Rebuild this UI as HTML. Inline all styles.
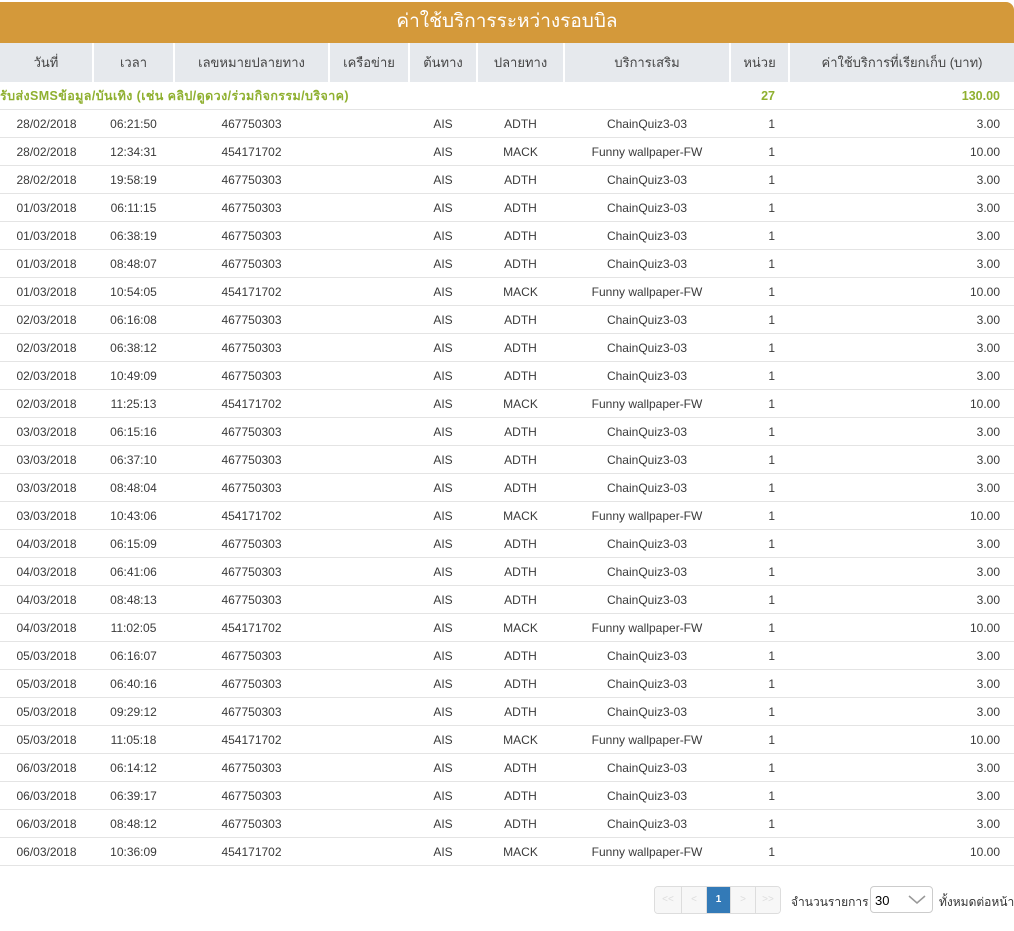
<!DOCTYPE html>
<html><head><meta charset="utf-8"><style>
body{margin:0;width:1014px;height:931px;background:#fff;font-family:"Liberation Sans","Noto Sans CJK SC",sans-serif;overflow:hidden;position:relative}
.title{position:absolute;left:0;top:2px;width:1014px;height:41px;background:#d4993a;border-top-right-radius:8px;color:#fff;font-size:19px;text-align:center;line-height:40px}
table{position:absolute;left:0;top:43px;border-collapse:collapse;table-layout:fixed;width:1014px;font-size:12px;color:#3a3a3a}
th{background:#e6e9ed;height:39px;font-weight:normal;font-size:13px;color:#444;border-left:2px solid #fff;padding:0}
th:first-child{border-left:none}
td{height:27px;border-bottom:1px solid #e4e4e4;text-align:center;padding:0;white-space:nowrap}
td.r{text-align:right;padding-right:14px}
td.u{text-align:right;padding-right:14px}
tr.g td{color:#8fb030;font-weight:bold;font-size:12.5px}
.pg{position:absolute;top:886px;left:654px;display:flex;border:1px solid #ddd;border-radius:4px;height:26px;overflow:hidden}
.pg span{width:24px;border-left:1px solid #ddd;color:#ddd;font-size:10px;text-align:center;line-height:26px;background:#f7f7f7}
.pg span:first-child{border:none;width:26px}
.pg span.a{background:#337ab7;color:#fff;font-weight:bold;width:23px}
.lab{position:absolute;top:893px;font-size:12px;color:#333;white-space:nowrap}
.sel{position:absolute;left:870px;top:886px;width:63px;height:27px;border:1px solid #ccc;border-radius:4px;font-size:13px;line-height:27px;box-sizing:border-box;padding-left:4px}
</style></head><body>
<div class="title">ค่าใช้บริการระหว่างรอบบิล</div>
<table>
<colgroup><col style="width:93px"><col style="width:81px"><col style="width:155px"><col style="width:80px"><col style="width:68px"><col style="width:87px"><col style="width:166px"><col style="width:59px"><col style="width:225px"></colgroup>
<tr><th>วันที่</th><th>เวลา</th><th>เลขหมายปลายทาง</th><th>เครือข่าย</th><th>ต้นทาง</th><th>ปลายทาง</th><th>บริการเสริม</th><th>หน่วย</th><th>ค่าใช้บริการที่เรียกเก็บ (บาท)</th></tr>
<tr class="g"><td colspan="7" style="text-align:left;overflow:visible;letter-spacing:0.4px">รับส่งSMSข้อมูล/บันเทิง (เช่น คลิป/ดูดวง/ร่วมกิจกรรม/บริจาค)</td><td class="u">27</td><td class="r">130.00</td></tr>
<tr><td>28/02/2018</td><td>06:21:50</td><td>467750303</td><td></td><td>AIS</td><td>ADTH</td><td>ChainQuiz3-03</td><td class="u">1</td><td class="r">3.00</td></tr>
<tr><td>28/02/2018</td><td>12:34:31</td><td>454171702</td><td></td><td>AIS</td><td>MACK</td><td>Funny wallpaper-FW</td><td class="u">1</td><td class="r">10.00</td></tr>
<tr><td>28/02/2018</td><td>19:58:19</td><td>467750303</td><td></td><td>AIS</td><td>ADTH</td><td>ChainQuiz3-03</td><td class="u">1</td><td class="r">3.00</td></tr>
<tr><td>01/03/2018</td><td>06:11:15</td><td>467750303</td><td></td><td>AIS</td><td>ADTH</td><td>ChainQuiz3-03</td><td class="u">1</td><td class="r">3.00</td></tr>
<tr><td>01/03/2018</td><td>06:38:19</td><td>467750303</td><td></td><td>AIS</td><td>ADTH</td><td>ChainQuiz3-03</td><td class="u">1</td><td class="r">3.00</td></tr>
<tr><td>01/03/2018</td><td>08:48:07</td><td>467750303</td><td></td><td>AIS</td><td>ADTH</td><td>ChainQuiz3-03</td><td class="u">1</td><td class="r">3.00</td></tr>
<tr><td>01/03/2018</td><td>10:54:05</td><td>454171702</td><td></td><td>AIS</td><td>MACK</td><td>Funny wallpaper-FW</td><td class="u">1</td><td class="r">10.00</td></tr>
<tr><td>02/03/2018</td><td>06:16:08</td><td>467750303</td><td></td><td>AIS</td><td>ADTH</td><td>ChainQuiz3-03</td><td class="u">1</td><td class="r">3.00</td></tr>
<tr><td>02/03/2018</td><td>06:38:12</td><td>467750303</td><td></td><td>AIS</td><td>ADTH</td><td>ChainQuiz3-03</td><td class="u">1</td><td class="r">3.00</td></tr>
<tr><td>02/03/2018</td><td>10:49:09</td><td>467750303</td><td></td><td>AIS</td><td>ADTH</td><td>ChainQuiz3-03</td><td class="u">1</td><td class="r">3.00</td></tr>
<tr><td>02/03/2018</td><td>11:25:13</td><td>454171702</td><td></td><td>AIS</td><td>MACK</td><td>Funny wallpaper-FW</td><td class="u">1</td><td class="r">10.00</td></tr>
<tr><td>03/03/2018</td><td>06:15:16</td><td>467750303</td><td></td><td>AIS</td><td>ADTH</td><td>ChainQuiz3-03</td><td class="u">1</td><td class="r">3.00</td></tr>
<tr><td>03/03/2018</td><td>06:37:10</td><td>467750303</td><td></td><td>AIS</td><td>ADTH</td><td>ChainQuiz3-03</td><td class="u">1</td><td class="r">3.00</td></tr>
<tr><td>03/03/2018</td><td>08:48:04</td><td>467750303</td><td></td><td>AIS</td><td>ADTH</td><td>ChainQuiz3-03</td><td class="u">1</td><td class="r">3.00</td></tr>
<tr><td>03/03/2018</td><td>10:43:06</td><td>454171702</td><td></td><td>AIS</td><td>MACK</td><td>Funny wallpaper-FW</td><td class="u">1</td><td class="r">10.00</td></tr>
<tr><td>04/03/2018</td><td>06:15:09</td><td>467750303</td><td></td><td>AIS</td><td>ADTH</td><td>ChainQuiz3-03</td><td class="u">1</td><td class="r">3.00</td></tr>
<tr><td>04/03/2018</td><td>06:41:06</td><td>467750303</td><td></td><td>AIS</td><td>ADTH</td><td>ChainQuiz3-03</td><td class="u">1</td><td class="r">3.00</td></tr>
<tr><td>04/03/2018</td><td>08:48:13</td><td>467750303</td><td></td><td>AIS</td><td>ADTH</td><td>ChainQuiz3-03</td><td class="u">1</td><td class="r">3.00</td></tr>
<tr><td>04/03/2018</td><td>11:02:05</td><td>454171702</td><td></td><td>AIS</td><td>MACK</td><td>Funny wallpaper-FW</td><td class="u">1</td><td class="r">10.00</td></tr>
<tr><td>05/03/2018</td><td>06:16:07</td><td>467750303</td><td></td><td>AIS</td><td>ADTH</td><td>ChainQuiz3-03</td><td class="u">1</td><td class="r">3.00</td></tr>
<tr><td>05/03/2018</td><td>06:40:16</td><td>467750303</td><td></td><td>AIS</td><td>ADTH</td><td>ChainQuiz3-03</td><td class="u">1</td><td class="r">3.00</td></tr>
<tr><td>05/03/2018</td><td>09:29:12</td><td>467750303</td><td></td><td>AIS</td><td>ADTH</td><td>ChainQuiz3-03</td><td class="u">1</td><td class="r">3.00</td></tr>
<tr><td>05/03/2018</td><td>11:05:18</td><td>454171702</td><td></td><td>AIS</td><td>MACK</td><td>Funny wallpaper-FW</td><td class="u">1</td><td class="r">10.00</td></tr>
<tr><td>06/03/2018</td><td>06:14:12</td><td>467750303</td><td></td><td>AIS</td><td>ADTH</td><td>ChainQuiz3-03</td><td class="u">1</td><td class="r">3.00</td></tr>
<tr><td>06/03/2018</td><td>06:39:17</td><td>467750303</td><td></td><td>AIS</td><td>ADTH</td><td>ChainQuiz3-03</td><td class="u">1</td><td class="r">3.00</td></tr>
<tr><td>06/03/2018</td><td>08:48:12</td><td>467750303</td><td></td><td>AIS</td><td>ADTH</td><td>ChainQuiz3-03</td><td class="u">1</td><td class="r">3.00</td></tr>
<tr><td>06/03/2018</td><td>10:36:09</td><td>454171702</td><td></td><td>AIS</td><td>MACK</td><td>Funny wallpaper-FW</td><td class="u">1</td><td class="r">10.00</td></tr>
</table>
<div class="pg"><span>&lt;&lt;</span><span>&lt;</span><span class="a">1</span><span>&gt;</span><span>&gt;&gt;</span></div>
<div class="lab" style="left:791px">จำนวนรายการ</div>
<div class="sel">30<svg style="position:absolute;right:6px;top:8px" width="18" height="10" viewBox="0 0 18 10"><path d="M1 1 L9 8 L17 1" fill="none" stroke="#999" stroke-width="1.5"/></svg></div>
<div class="lab" style="left:939px">ทั้งหมดต่อหน้า</div>
</body></html>
